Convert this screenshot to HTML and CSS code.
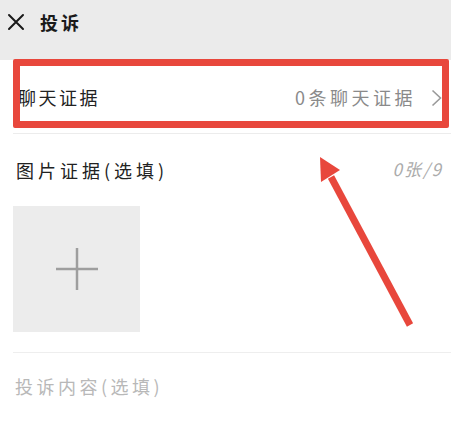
FILE: index.html
```html
<!DOCTYPE html>
<html lang="zh-CN">
<head>
<meta charset="utf-8">
<link rel="stylesheet" href="styles.css">
</head>
<body>
<div class="page">
  <header class="topbar">
    <svg class="close" width="18" height="18" viewBox="0 0 18 18"><path d="M2 2 L16 16 M16 2 L2 16" stroke="#1a1a1a" stroke-width="2" fill="none" stroke-linecap="round"/></svg>
    <span class="title">投诉</span>
  </header>
  <div class="content">
    <div class="row chat">
      <span class="label">聊天证据</span>
      <span class="value">0条聊天证据</span>
      <svg class="chev" width="11" height="18" viewBox="0 0 11 18"><path d="M1.5 1.5 L9.5 9 L1.5 16.5" stroke="#9a9a9a" stroke-width="1.6" fill="none"/></svg>
    </div>
    <div class="section">
      <div class="row pics">
        <span class="label wide">图片证据(选填)</span>
        <span class="count">0张/9</span>
      </div>
      <div class="addbox">
        <svg width="44" height="44" viewBox="0 0 44 44"><path d="M22 1 V43 M1 22 H43" stroke="#9e9e9e" stroke-width="2.5" fill="none"/></svg>
      </div>
    </div>
    <div class="row desc">
      <span class="placeholder">投诉内容(选填)</span>
    </div>
  </div>
  <div class="highlight"></div>
  <svg class="arrow" width="451" height="435" viewBox="0 0 451 435">
    <line x1="410" y1="325" x2="331" y2="177" stroke="#e8473c" stroke-width="7"/>
    <polygon points="320,157 340,170 321,182" fill="#e8473c"/>
  </svg>
</div>
</body>
</html>
```
FILE: styles.css
```css
html, body {
  margin: 0;
  padding: 0;
  background: #ffffff;
}
body {
  font-family: "Noto Sans CJK SC", "Noto Sans", sans-serif;
  color: #222;
}
.page {
  position: relative;
  width: 451px;
  height: 435px;
  overflow: hidden;
}
.topbar {
  height: 60px;
  background: #ebebeb;
  display: flex;
  align-items: center;
  padding-left: 7px;
  gap: 15px;
  padding-bottom: 17px;
  box-sizing: border-box;
}
.title {
  font-size: 18px;
  font-weight: 700;
  letter-spacing: 3px;
  color: #1a1a1a;
}
.content {
  margin-left: 13px;
}
.row {
  display: flex;
  align-items: center;
}
.label {
  font-size: 18px;
  letter-spacing: 2.5px;
  color: #222;
}
.label.wide {
  letter-spacing: 4px;
}
.chat {
  height: 73px;
  padding-left: 5px;
  padding-right: 9px;
  border-bottom: 1px solid #ececec;
}
.chat .value {
  margin-left: auto;
  font-size: 18px;
  letter-spacing: 3.5px;
  color: #8a8a8a;
  margin-right: 15px;
}
.chat .chev {
  margin-top: 2px;
}
.pics {
  height: 72px;
  padding-left: 3px;
  padding-right: 8px;
}
.pics .count {
  margin-left: auto;
  font-size: 17px;
  font-style: italic;
  color: #ababab;
  letter-spacing: 2px;
  margin-top: -4px;
}
.section {
  border-bottom: 1px solid #eeeeee;
  padding-bottom: 20px;
}
.addbox {
  width: 127px;
  height: 126px;
  background: #ececec;
  display: flex;
  align-items: center;
  justify-content: center;
}
.desc {
  height: 66px;
  padding-left: 2px;
}
.placeholder {
  font-size: 18px;
  letter-spacing: 3.5px;
  color: #b8b8b8;
}
.highlight {
  position: absolute;
  left: 13px;
  top: 59px;
  width: 436px;
  height: 69px;
  border: 7px solid #e8473c;
  border-radius: 2px;
  box-sizing: border-box;
}
.arrow {
  position: absolute;
  left: 0;
  top: 0;
  pointer-events: none;
}
```
